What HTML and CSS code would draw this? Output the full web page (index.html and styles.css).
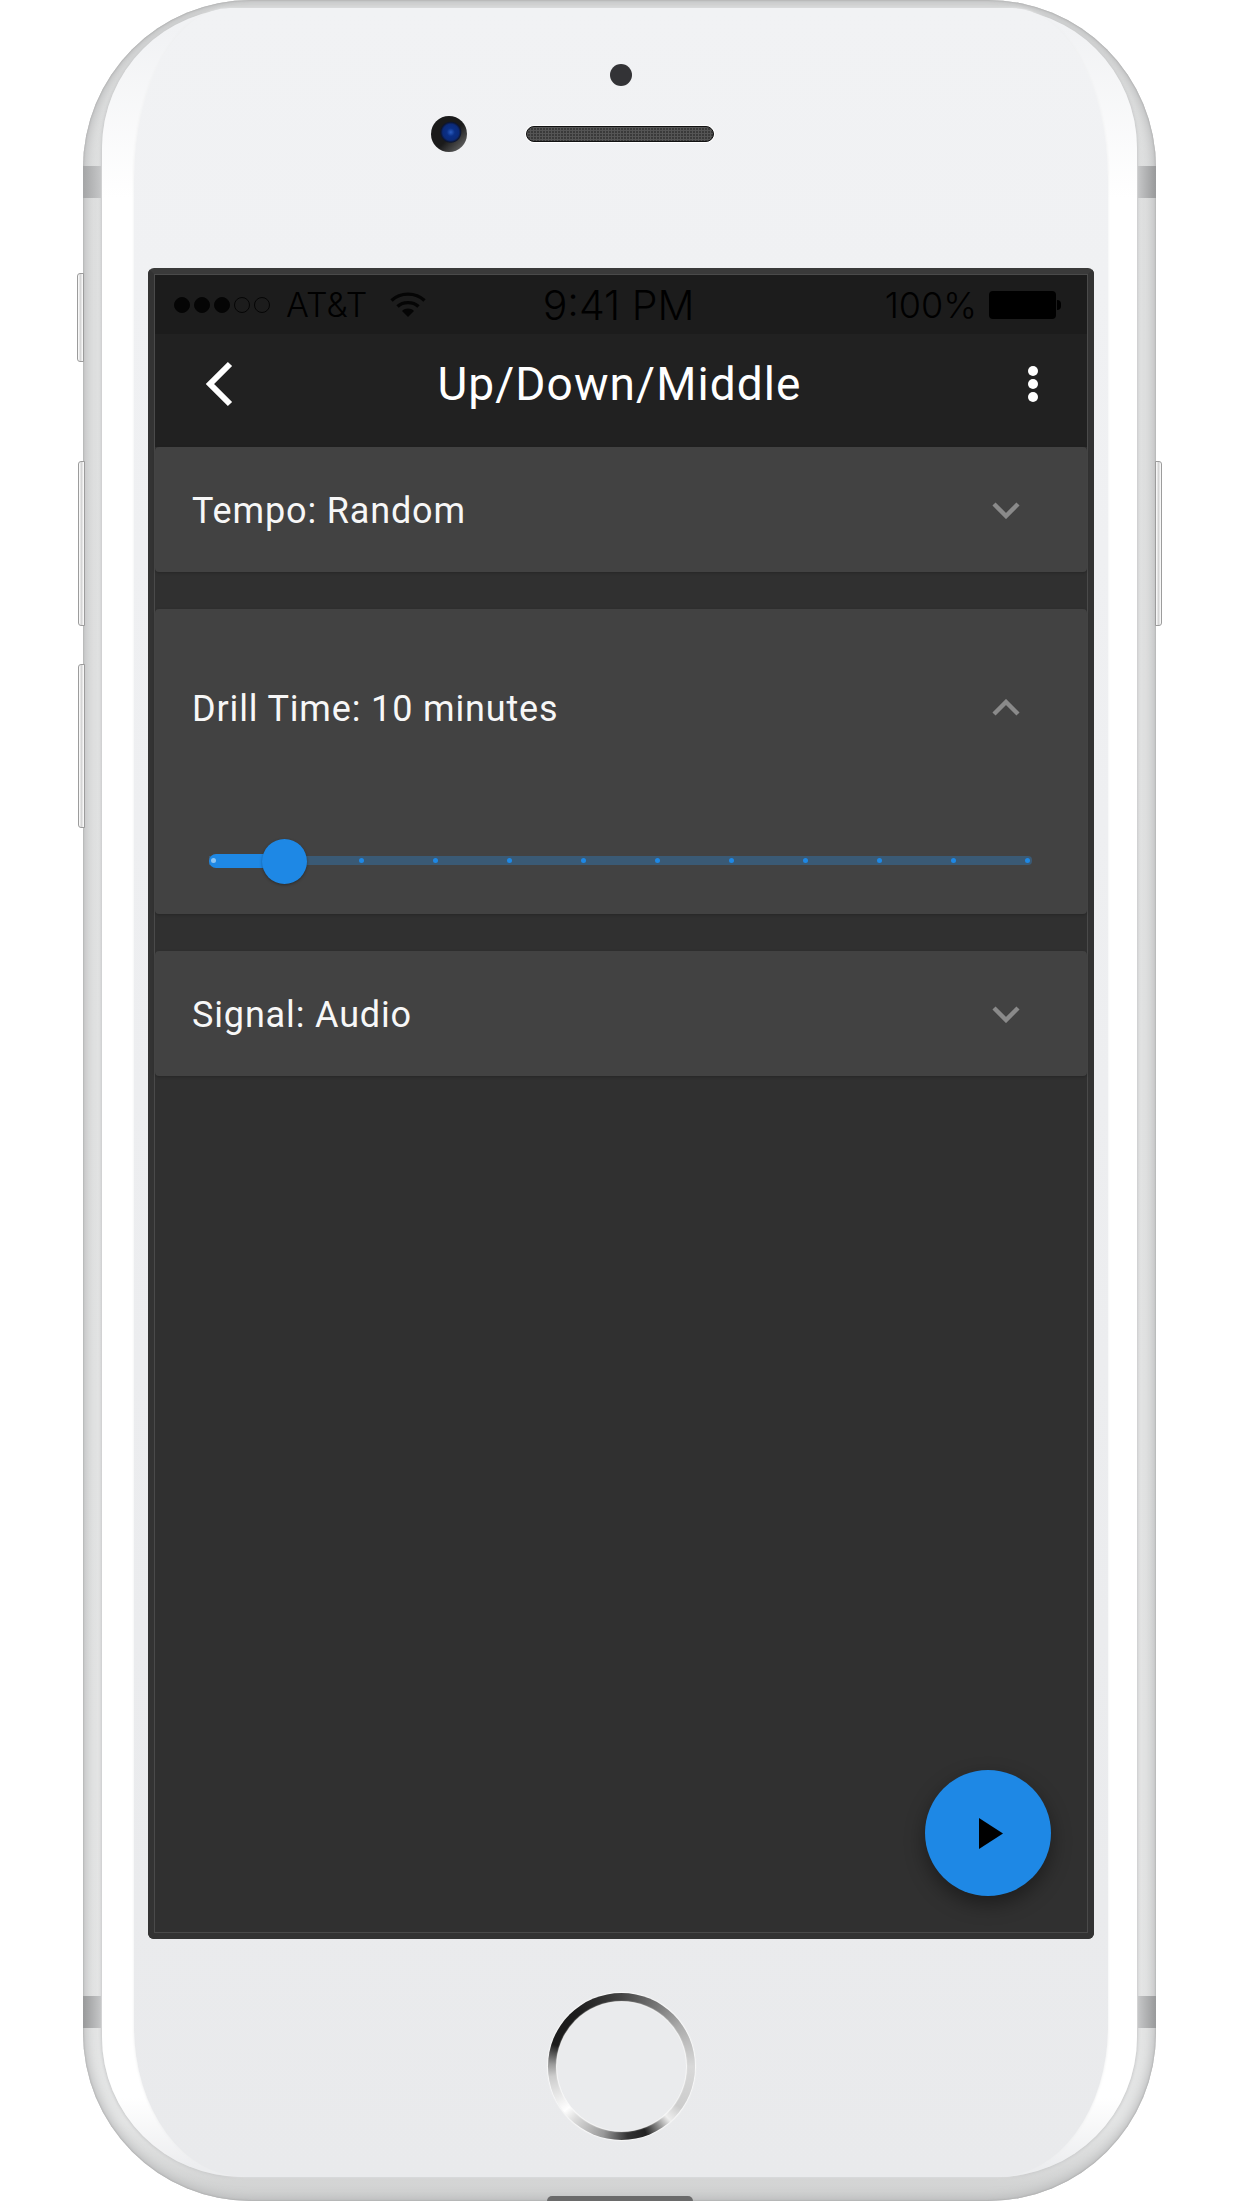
FILE: index.html
```html
<!DOCTYPE html>
<html>

<head>
  <meta charset="utf-8" />
  <title>Up/Down/Middle</title>
  <meta name="viewport" content="width=device-width, initial-scale=1">
  <link rel="stylesheet" href="styles.css">
</head>

<body>
  <section class="phone">
    <i class="side-btn mute"></i>
    <i class="side-btn vol-up"></i>
    <i class="side-btn vol-down"></i>
    <i class="side-btn power"></i>
    <i class="band top-left"></i>
    <i class="band top-right"></i>
    <i class="band bottom-left"></i>
    <i class="band bottom-right"></i>
    <i class="notch"></i>

    <div class="bezel">
      <div class="face">
        <div class="sensor"></div>
        <div class="front-row">
          <div class="camera"></div>
          <div class="speaker"></div>
        </div>

        <main class="screen">
          <div class="screen-inner">
            <div class="status-bar">
              <div class="status-left">
                <span class="signal">
                  <i class="on"></i><i class="on"></i><i class="on"></i><i></i><i></i>
                </span>
                <span class="carrier">AT&amp;T</span>
                <svg class="wifi" viewBox="0 0 36 25" width="36" height="25">
                  <path d="M1.5 8.5C10.5 0 25.5 0 34.5 8.5" fill="none" stroke="#050505" stroke-width="3.4" />
                  <path d="M7.5 14.5C13 9.3 23 9.3 28.5 14.5" fill="none" stroke="#050505" stroke-width="3.4" />
                  <path d="M12 19L18 25L24 19C20.5 15.8 15.5 15.8 12 19Z" fill="#050505" />
                </svg>
              </div>
              <div class="time">9:41 PM</div>
              <div class="status-right">
                <span class="percent">100%</span>
                <span class="battery"><i></i></span>
              </div>
            </div>

            <header class="app-bar">
              <svg class="back" viewBox="0 0 28 46" width="28" height="46">
                <path d="M25 3L5 23L25 43" fill="none" stroke="#fff" stroke-width="6" />
              </svg>
              <h1>Up/Down/Middle</h1>
              <div class="kebab"><i></i><i></i><i></i></div>
            </header>

            <section class="card">
              <div class="card-head">
                <span>Tempo: Random</span>
                <svg class="chevron" viewBox="0 0 28 18" width="28" height="18">
                  <path d="M2 3L14 15L26 3" fill="none" stroke="#8a8a8a" stroke-width="4.4" />
                </svg>
              </div>
            </section>

            <section class="card open">
              <div class="card-head">
                <span>Drill Time: 10 minutes</span>
                <svg class="chevron" viewBox="0 0 28 18" width="28" height="18">
                  <path d="M2 15L14 3L26 15" fill="none" stroke="#8a8a8a" stroke-width="4.4" />
                </svg>
              </div>
              <div class="slider">
                <div class="fill"></div>
                <div class="ticks">
                  <i class="first"></i><i></i><i></i><i></i><i></i><i></i><i></i><i></i><i></i><i></i><i></i><i></i>
                </div>
                <div class="thumb"></div>
              </div>
            </section>

            <section class="card">
              <div class="card-head">
                <span>Signal: Audio</span>
                <svg class="chevron" viewBox="0 0 28 18" width="28" height="18">
                  <path d="M2 3L14 15L26 3" fill="none" stroke="#8a8a8a" stroke-width="4.4" />
                </svg>
              </div>
            </section>

            <button type="button" class="fab">
              <svg viewBox="0 0 24 31" width="24" height="31">
                <path d="M0 0L24 15.5L0 31Z" fill="#000" />
              </svg>
            </button>
          </div>
        </main>

        <div class="home"><div class="home-in"></div></div>
      </div>
    </div>
  </section>
</body>

</html>
```

FILE: styles.css
```css
* { box-sizing: border-box; margin: 0; padding: 0; }
html, body { background: #fff; }
body {
  width: 1242px;
  height: 2208px;
  overflow: hidden;
  font-family: Roboto, "Liberation Sans", sans-serif;
}

/* device shell */
.phone {
  position: relative;
  width: 1073px;
  height: 2201px;
  margin-left: 83px;
  padding: 8px 19px 0;
  border-radius: 168px;
  background: linear-gradient(to bottom, #dedfdf, #e4e5e5 2120px, #cfd0d0);
  box-shadow: inset 0 0 2px #999, inset 0 0 12px 2px #b6b7b8;
}
.side-btn {
  position: absolute;
  width: 7px;
  border: 1px solid #9c9c9c;
  background: linear-gradient(to right, #fff, #d5d5d5 50%, #fff);
}
.side-btn.mute { left: -6px; top: 273px; height: 89px; border-radius: 3px 0 0 3px; }
.side-btn.vol-up { left: -5px; top: 461px; height: 165px; border-radius: 3px 0 0 3px; }
.side-btn.vol-down { left: -5px; top: 664px; height: 164px; border-radius: 3px 0 0 3px; }
.side-btn.power { right: -6px; top: 461px; height: 165px; border-radius: 0 3px 3px 0; }
.band {
  position: absolute;
  width: 18px;
  height: 32px;
}
.band.top-left { left: 0; top: 166px; background: linear-gradient(to right, #a4a5a6, #c6c7c8); }
.band.top-right { right: 0; top: 166px; background: linear-gradient(to left, #98999a, #c6c7c8); }
.band.bottom-left { left: 0; top: 1996px; background: linear-gradient(to right, #98999a, #c6c7c8); }
.band.bottom-right { right: 0; top: 1996px; background: linear-gradient(to left, #98999a, #c6c7c8); }
.notch {
  position: absolute;
  left: 464px;
  bottom: 0;
  width: 146px;
  height: 5px;
  border-radius: 8px 8px 0 0;
  background: #6a6a6a;
}
.bezel {
  height: 2169px;
  padding: 0 29px 0 32px;
  border-radius: 140px;
  background: linear-gradient(to bottom, #f1f2f4 20px, #fff 190px, #fff 2090px, #ecedef 2160px);
  box-shadow: 0 0 3px 1px #c9cacb;
}
.face {
  display: flex;
  flex-direction: column;
  align-items: center;
  height: 2169px;
  padding-top: 56px;
  border-radius: 96px 96px 110px 110px / 170px 170px 150px 150px;
  background: linear-gradient(to bottom, #f1f2f4, #e9eaec);
  box-shadow: 0 0 3px #eceded;
}
.sensor {
  width: 22px;
  height: 22px;
  border-radius: 50%;
  background: #333336;
}
.front-row {
  display: grid;
  grid-template-columns: 1fr 188px 1fr;
  align-items: center;
  width: 100%;
  margin-top: 30px;
  padding-right: 2px;
}
.camera {
  justify-self: end;
  width: 36px;
  height: 36px;
  margin-right: 59px;
  border-radius: 50%;
  background:
    radial-gradient(circle at 55% 45%, #2a5cc0 0, #0a2f86 4px, #0b2a78 8px, rgba(10, 20, 50, .9) 10px, transparent 11px),
    linear-gradient(135deg, #1a1a1a 55%, #777);
}
.speaker {
  height: 16px;
  border: 1px solid #111;
  border-radius: 8px;
  background-color: #3a3a3a;
  background-image:
    repeating-linear-gradient(to right, #555 0 1px, transparent 1px 3px),
    repeating-linear-gradient(to bottom, #555 0 1px, transparent 1px 3px);
  box-shadow: 0 0 0 1px #fff;
}

/* screen */
.screen {
  width: 946px;
  height: 1671px;
  margin-top: 116px;
  border: 7px solid #333;
  border-top-color: #3a3a3a;
  border-radius: 6px;
  background: #303030;
}
.screen-inner {
  position: relative;
  height: 100%;
  box-shadow: 0 0 0 1px #4a4a4a;
  background: #303030;
}
.status-bar {
  display: grid;
  grid-template-columns: 1fr auto 1fr;
  align-items: center;
  height: 59px;
  padding: 0 26px 0 19px;
  background: #1c1c1c;
  color: #000;
  font-family: Inter, "Liberation Sans", sans-serif;
  font-weight: 300;
}
.status-left {
  display: flex;
  align-items: center;
}
.signal {
  display: flex;
  gap: 4px;
}
.signal i {
  width: 16px;
  height: 16px;
  border: 1.5px solid #050505;
  border-radius: 50%;
}
.signal i.on { background: #050505; }
.carrier {
  margin-left: 16px;
  font-size: 34px;
}
.wifi { margin-left: 23px; }
.time {
  margin-left: 2px;
  font-size: 41px;
}
.status-right {
  display: flex;
  align-items: center;
  justify-content: flex-end;
}
.percent { font-size: 36px; }
.battery {
  position: relative;
  width: 67px;
  height: 28px;
  margin: 0 5px 0 12px;
  border-radius: 4px;
  background: #000;
}
.battery i {
  position: absolute;
  right: -5px;
  top: 9px;
  width: 4px;
  height: 10px;
  border-radius: 0 4px 4px 0;
  background: #000;
}
.app-bar {
  display: grid;
  grid-template-columns: 1fr auto 1fr;
  align-items: center;
  height: 113px;
  padding: 0 49px 13px 50px;
  background: #212121;
}
.app-bar h1 {
  margin-left: -4px;
  color: #fff;
  font-size: 46px;
  font-weight: 400;
  letter-spacing: 1.1px;
}
.kebab {
  display: flex;
  flex-direction: column;
  justify-self: end;
  gap: 3px;
}
.kebab i {
  width: 10px;
  height: 10px;
  border-radius: 50%;
  background: #fff;
}

/* cards */
.card {
  margin-bottom: 37px;
  border-radius: 4px;
  background: #424242;
  box-shadow: 0 1px 3px rgba(0, 0, 0, .22);
}
.card-head {
  display: flex;
  align-items: center;
  justify-content: space-between;
  height: 125px;
  padding: 0 67px 0 37px;
  color: #f7f7f7;
  font-size: 36px;
  letter-spacing: .85px;
}
.card-head span { padding-top: 2px; }
.open .card-head { height: 197px; }
.slider {
  position: relative;
  height: 14px;
  margin: 48px 55px 0 54px;
  padding-bottom: 46px;
  box-sizing: content-box;
}
.ticks {
  position: relative;
  top: 2px;
  display: flex;
  align-items: center;
  justify-content: space-between;
  height: 9px;
  padding: 0 2px;
  border-radius: 0 4px 4px 0;
  background: #3a5a75;
}
.ticks i {
  width: 5px;
  height: 5px;
  border-radius: 50%;
  background: #1e88e5;
}
.ticks i.first { position: relative; z-index: 2; background: #8cc4f2; }
.fill {
  position: absolute;
  left: 0;
  top: 0;
  z-index: 1;
  width: 75px;
  height: 14px;
  border-radius: 7px 0 0 7px;
  background: #1e88e5;
}
.thumb {
  position: absolute;
  left: 53px;
  top: -15px;
  z-index: 3;
  width: 45px;
  height: 45px;
  border-radius: 50%;
  background: #1e88e5;
  box-shadow: 0 1px 3px rgba(0, 0, 0, .35);
}
.fab {
  position: absolute;
  right: 36px;
  bottom: 36px;
  display: flex;
  align-items: center;
  justify-content: center;
  width: 126px;
  height: 126px;
  padding-left: 6px;
  border: none;
  border-radius: 50%;
  background: #1e88e5;
  box-shadow: 0 8px 20px rgba(0, 0, 0, .4);
}

/* home button */
.home {
  width: 147px;
  height: 147px;
  margin-top: 54px;
  padding: 9px;
  border-radius: 50%;
  background: conic-gradient(#444 0deg, #777 30deg, #aaa 55deg, #d8d8d8 90deg, #ccc 125deg, #eee 138deg, #222 160deg, #333 175deg, #999 195deg, #ddd 222deg, #fff 232deg, #ccc 262deg, #999 272deg, #1c1c1c 288deg, #1c1c1c 320deg, #333 345deg, #444 360deg);
  box-shadow: 0 0 1px 1px #f8f8f8;
}
.home-in {
  width: 100%;
  height: 100%;
  border-radius: 50%;
  background: #eaebed;
  box-shadow: 0 0 1px 1px #fafafa;
}
```
